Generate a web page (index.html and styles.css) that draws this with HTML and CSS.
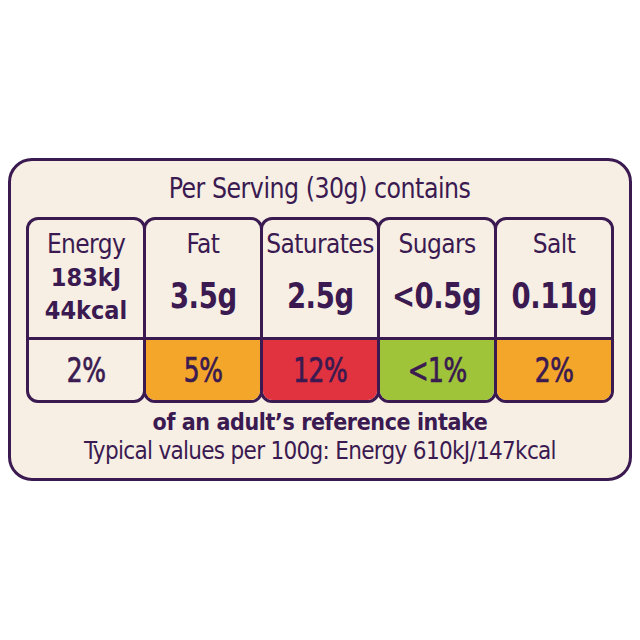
FILE: index.html
```html
<!DOCTYPE html>
<html lang="en">
<head>
    <meta charset="UTF-8">
    <title>Nutrition Label</title>
    <link rel="stylesheet" href="styles.css">
</head>
<body>
    <div class="label">
        <div class="title"><span>Per Serving (30g) contains</span></div>
        <div class="cells">
            <div class="cell">
                <div class="top">
                    <div class="name">Energy</div>
                    <div class="value small">183kJ<br>44kcal</div>
                </div>
                <div class="pct"><span>2%</span></div>
            </div>
            <div class="cell">
                <div class="top">
                    <div class="name">Fat</div>
                    <div class="value"><span>3.5g</span></div>
                </div>
                <div class="pct amber"><span>5%</span></div>
            </div>
            <div class="cell">
                <div class="top">
                    <div class="name">Saturates</div>
                    <div class="value"><span>2.5g</span></div>
                </div>
                <div class="pct red"><span>12%</span></div>
            </div>
            <div class="cell">
                <div class="top">
                    <div class="name">Sugars</div>
                    <div class="value"><span>&lt;0.5g</span></div>
                </div>
                <div class="pct green"><span>&lt;1%</span></div>
            </div>
            <div class="cell">
                <div class="top">
                    <div class="name">Salt</div>
                    <div class="value"><span>0.11g</span></div>
                </div>
                <div class="pct amber"><span>2%</span></div>
            </div>
        </div>
        <div class="ri">of an adult’s reference intake</div>
        <div class="typical">Typical values per 100g: Energy 610kJ/147kcal</div>
    </div>
</body>
</html>
```

FILE: styles.css
```css
body {
    margin: 0;
    background: #fff;
    font-family: "DejaVu Sans Condensed", "DejaVu Sans", sans-serif;
    color: #3a1a50;
}
.label {
    margin: 158px 8px 0;
    width: 624px;
    height: 323px;
    box-sizing: border-box;
    border: 3px solid #3a1a50;
    border-radius: 24px;
    background: #f7eee4;
    display: flex;
    flex-direction: column;
    align-items: center;
}
.title {
    font-size: 28px;
    line-height: 32px;
    margin-top: 12px;
    letter-spacing: -0.5px;
}
.title span {
    display: inline-block;
    transform: scaleX(0.94);
}
.cells {
    display: flex;
    margin-top: 12px;
}
.cell {
    width: 120px;
    height: 186px;
    box-sizing: border-box;
    border: 3px solid #3a1a50;
    border-radius: 12px;
    overflow: hidden;
    display: flex;
    flex-direction: column;
    margin-left: -3px;
}
.cell:first-child {
    margin-left: 0;
}
.top {
    height: 117px;
    border-bottom: 3px solid #3a1a50;
    display: flex;
    flex-direction: column;
    align-items: center;
}
.name {
    font-size: 26px;
    line-height: 30px;
    margin-top: 9px;
    letter-spacing: -0.6px;
    white-space: nowrap;
}
.value {
    flex: 1;
    display: flex;
    align-items: center;
    font-size: 36px;
    font-weight: bold;
    letter-spacing: -0.5px;
    margin-top: -6px;
}
.value span {
    display: inline-block;
    transform: scaleX(0.85);
}
.value.small {
    font-size: 25px;
    line-height: 33px;
    text-align: center;
    letter-spacing: 0;
    margin-top: -8px;
}
.pct {
    flex: 1;
    display: flex;
    align-items: center;
    justify-content: center;
    font-size: 33px;
    letter-spacing: -0.5px;
    -webkit-text-stroke: 0.7px #3a1a50;
}
.pct span {
    display: inline-block;
    transform: scaleX(0.84);
}
.amber {
    background: #f4a62a;
}
.red {
    background: #e1323f;
}
.green {
    background: #9fc43a;
}
.ri {
    font-size: 23px;
    font-weight: bold;
    line-height: 28px;
    margin-top: 5px;
    letter-spacing: -0.4px;
}
.typical {
    font-size: 24px;
    line-height: 30px;
    letter-spacing: -0.7px;
}
```
